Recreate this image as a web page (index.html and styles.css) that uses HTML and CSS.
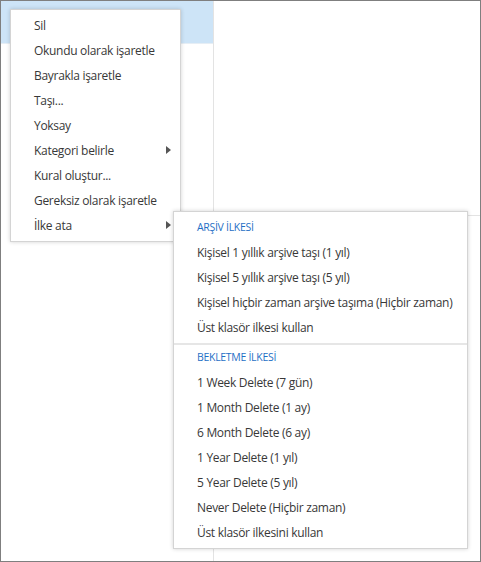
FILE: index.html
```html
<!DOCTYPE html>
<html lang="tr">
<head>
<meta charset="utf-8">
<link rel="stylesheet" href="styles.css">
</head>
<body>
<div class="frame">
  <div class="list-pane">
    <div class="row selected"></div>
  </div>
  <div class="read-pane">
    <div class="read-top"></div>
  </div>

  <ul class="menu main-menu">
    <li>Sil</li>
    <li>Okundu olarak işaretle</li>
    <li>Bayrakla işaretle</li>
    <li>Taşı...</li>
    <li>Yoksay</li>
    <li class="has-sub">Kategori belirle</li>
    <li>Kural oluştur...</li>
    <li>Gereksiz olarak işaretle</li>
    <li class="has-sub">İlke ata</li>
  </ul>

  <ul class="menu sub-menu">
    <li class="head">ARŞİV İLKESİ</li>
    <li>Kişisel 1 yıllık arşive taşı (1 yıl)</li>
    <li>Kişisel 5 yıllık arşive taşı (5 yıl)</li>
    <li>Kişisel hiçbir zaman arşive taşıma (Hiçbir zaman)</li>
    <li>Üst klasör ilkesi kullan</li>
    <li class="sep"></li>
    <li class="head">BEKLETME İLKESİ</li>
    <li>1 Week Delete (7 gün)</li>
    <li>1 Month Delete (1 ay)</li>
    <li>6 Month Delete (6 ay)</li>
    <li>1 Year Delete (1 yıl)</li>
    <li>5 Year Delete (5 yıl)</li>
    <li>Never Delete (Hiçbir zaman)</li>
    <li>Üst klasör ilkesini kullan</li>
  </ul>
</div>
</body>
</html>
```

FILE: styles.css
```css
* { box-sizing: border-box; }
html, body { margin: 0; padding: 0; background: #fff; }
body {
  font-family: "Open Sans", "Noto Sans", sans-serif;
  font-size: 12px;
  letter-spacing: -0.3px;
  color: #383838;
}
.frame {
  position: relative;
  width: 481px;
  height: 562px;
  border: 1px solid #7f7f7f;
  display: flex;
  overflow: hidden;
}
.list-pane {
  width: 213px;
  border-right: 1px solid #e3e3e3;
  display: flex;
  flex-direction: column;
}
.row.selected { height: 43px; background: #cde4f7; border-bottom: 1px solid #e6eef5; }
.read-pane { flex: 1; }
.read-top { height: 215px; border-bottom: 1px solid #e3e3e3; }

.menu {
  position: absolute;
  margin: 0;
  list-style: none;
  background: #fff;
  border: 1px solid #d4d4d4;
  box-shadow: 0 0 4px rgba(0,0,0,0.18);
  padding: 3px 0;
}
.menu li {
  height: 25px;
  line-height: 25px;
  white-space: nowrap;
  position: relative;
}
.main-menu {
  left: 9px;
  top: 8px;
  width: 171px;
  padding-left: 23px;
}
.main-menu li.has-sub::after {
  content: "";
  position: absolute;
  right: 9px;
  top: 8px;
  border-left: 5px solid #555;
  border-top: 4.5px solid transparent;
  border-bottom: 4.5px solid transparent;
}
.sub-menu {
  left: 172px;
  top: 210px;
  width: 295px;
}
.sub-menu li { padding-left: 23px; }
.sub-menu li.head {
  color: #1f6fc5;
  font-size: 10.5px;
  letter-spacing: -0.3px;
}
.sub-menu li.sep {
  height: 2px;
  margin-top: 3px;
  padding: 0;
  border-top: 2px solid #e6e6e6;
}
```
